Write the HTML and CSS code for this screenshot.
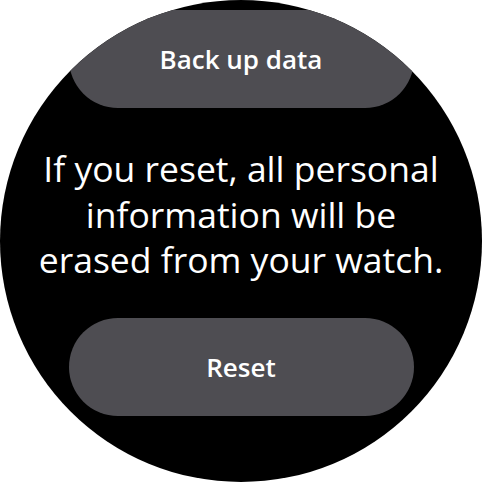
FILE: index.html
```html
<!DOCTYPE html>
<html>
<head>
<meta charset="utf-8">
<link rel="stylesheet" href="styles.css">
</head>
<body>
<div class="watch">
  <div class="screen">
    <div class="pill">Back up data</div>
    <p class="message">If you reset, all personal information will be erased from your watch.</p>
    <div class="pill">Reset</div>
  </div>
</div>
</body>
</html>
```
FILE: styles.css
```css
html, body {
  margin: 0;
  padding: 0;
  background: #ffffff;
}
.watch {
  width: 482px;
  height: 482px;
  border-radius: 50%;
  background: #000000;
  overflow: hidden;
}
.screen {
  display: flex;
  flex-direction: column;
  align-items: center;
  padding-top: 10px;
  font-family: "Open Sans", Roboto, sans-serif;
  color: #ffffff;
}
.pill {
  width: 345px;
  height: 98px;
  border-radius: 49px;
  background: #4e4d52;
  display: flex;
  align-items: center;
  justify-content: center;
  font-weight: 600;
  font-size: 26px;
}
.message {
  margin: 38px 0 35px;
  width: 420px;
  text-align: center;
  font-size: 35.5px;
  line-height: 45.5px;
}
```
